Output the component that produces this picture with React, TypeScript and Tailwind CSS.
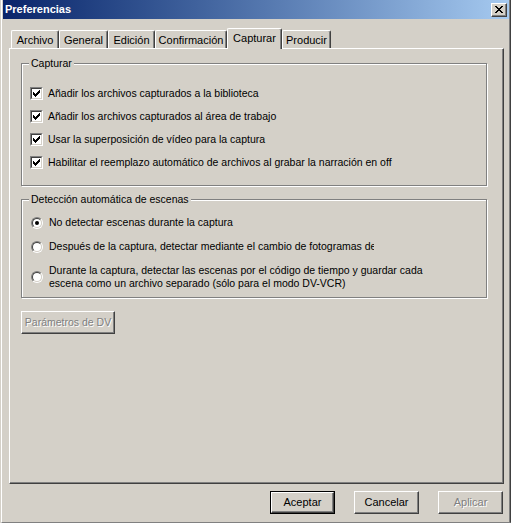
import React from 'react'

const CHECK = ['......X', '.....XX', 'X...XXX', 'XX.XXX.', 'XXXXX..', '.XXX...', '..X....']
const CLOSE_X = ['XX....XX', '.XX..XX.', '..XXXX..', '...XX...', '..XXXX..', '.XX..XX.', 'XX....XX']

function Pixels({ rows, color = '#000' }: { rows: string[]; color?: string }) {
  const w = rows[0].length
  const h = rows.length
  return (
    <svg width={w} height={h} viewBox={`0 0 ${w} ${h}`} shapeRendering="crispEdges" className="block">
      {rows.flatMap((row, y) =>
        row.split('').map((c, x) => (c === 'X' ? <rect key={`${x}-${y}`} x={x} y={y} width={1} height={1} fill={color} /> : null))
      )}
    </svg>
  )
}

const tabs = [
  { label: 'Archivo', w: 'w-[48px]' },
  { label: 'General', w: 'w-[49px]' },
  { label: 'Edición', w: 'w-[47px]' },
  { label: 'Confirmación', w: 'w-[72px]' },
  { label: 'Capturar', w: 'w-[55px]', active: true },
  { label: 'Producir', w: 'w-[49px]' },
]

const checks = [
  'Añadir los archivos capturados a la biblioteca',
  'Añadir los archivos capturados al área de trabajo',
  'Usar la superposición de vídeo para la captura',
  'Habilitar el reemplazo automático de archivos al grabar la narración en off',
]

function Checkbox() {
  return (
    <div className="w-[13px] h-[13px] shrink-0 border border-t-[#808080] border-l-[#808080] border-b-white border-r-white">
      <div className="w-full h-full bg-white border border-t-[#404040] border-l-[#404040] border-b-[#d4d0c8] border-r-[#d4d0c8] pl-px pt-px">
        <Pixels rows={CHECK} />
      </div>
    </div>
  )
}

function Radio({ checked }: { checked?: boolean }) {
  return (
    <div className="w-[12px] h-[12px] shrink-0 rounded-full border border-t-[#808080] border-l-[#808080] border-b-white border-r-white">
      <div className="w-full h-full rounded-full bg-white border border-t-[#404040] border-l-[#404040] border-b-[#d4d0c8] border-r-[#d4d0c8] flex items-center justify-center">
        {checked && <div className="w-[4px] h-[4px] rounded-full bg-black" />}
      </div>
    </div>
  )
}

function GroupBox({ title, className, children }: { title: string; className: string; children: React.ReactNode }) {
  return (
    <div className={`relative ml-[11px] w-[466px] border border-[#808080] shadow-[1px_1px_0_#fff,inset_1px_1px_0_#fff] ${className}`}>
      <span className="absolute left-[7px] -top-[7px] px-[2px] bg-[#d4d0c8] leading-[13px]">{title}</span>
      {children}
    </div>
  )
}

function Button({ children, isDefault, disabled, className = '' }: { children: React.ReactNode; isDefault?: boolean; disabled?: boolean; className?: string }) {
  const face = (
    <div className="w-full h-full border border-t-white border-l-white border-b-[#404040] border-r-[#404040] shadow-[inset_-1px_-1px_0_#808080] flex items-center justify-center">
      <span className={disabled ? 'text-[#808080] [text-shadow:1px_1px_0_#fff]' : ''}>{children}</span>
    </div>
  )
  return (
    <div className={`h-[23px] shrink-0 ${isDefault ? 'border border-black' : ''} ${className}`}>{face}</div>
  )
}

export default function App() {
  return (
    <div className="w-[511px] h-[523px] bg-[#d4d0c8] pl-px font-['Liberation_Sans',Arial,sans-serif] text-[10.5px] text-black overflow-hidden">
      <div className="h-full flex border-l border-white border-r border-r-[#404040] border-b border-b-[#808080]">
        <div className="flex-1 flex flex-col border-r border-r-[#808080] pl-px">
          {/* title bar */}
          <div className="h-[19px] flex items-center bg-linear-to-r from-[#0a246a] to-[#a6caf0] pl-[2px] pr-[2px]">
            <span className="font-bold text-white text-[11px] leading-none">Preferencias</span>
            <div className="ml-auto w-[16px] h-[14px] bg-[#d4d0c8] border border-t-white border-l-white border-b-[#404040] border-r-[#404040] shadow-[inset_-1px_-1px_0_#808080] flex items-center justify-center pb-px">
              <Pixels rows={CLOSE_X} />
            </div>
          </div>

          {/* tabs */}
          <div className="mt-[9px] ml-[8px] h-[20px] flex items-end relative z-10 text-[11px]">
            {tabs.map((t) =>
              t.active ? (
                <div
                  key={t.label}
                  className={`${t.w} h-[21px] -mb-px bg-[#d4d0c8] border-t border-l border-white border-r border-r-[#404040] shadow-[inset_-1px_0_0_#808080] rounded-t-[2px] flex items-center justify-center pb-[2px]`}
                >
                  {t.label}
                </div>
              ) : (
                <div
                  key={t.label}
                  className={`${t.w} h-[18px] border-t border-l border-white border-r border-r-[#404040] shadow-[inset_-1px_0_0_#808080] rounded-t-[2px] flex items-center justify-center pt-[1px]`}
                >
                  {t.label}
                </div>
              )
            )}
          </div>

          {/* tab panel */}
          <div className="ml-[6px] w-[495px] h-[436px] border-t border-l border-white border-r border-b border-r-[#404040] border-b-[#404040] shadow-[inset_-1px_-1px_0_#808080] flex flex-col">
            <GroupBox title="Capturar" className="mt-[14px] h-[123px]">
              <div className="pt-[23px] pl-[8px] flex flex-col gap-[10px]">
                {checks.map((c) => (
                  <div key={c} className="flex items-center gap-[5px] leading-[13px] whitespace-nowrap">
                    <Checkbox />
                    <span>{c}</span>
                  </div>
                ))}
              </div>
            </GroupBox>

            <GroupBox title="Detección automática de escenas" className="mt-[13px] h-[99px]">
              <div className="pt-[16px] pl-[9px] flex flex-col gap-[11px] leading-[13px]">
                <div className="flex items-center gap-[6px]">
                  <Radio checked />
                  <span>No detectar escenas durante la captura</span>
                </div>
                <div className="flex items-center gap-[6px]">
                  <Radio />
                  <span className="w-[325px] overflow-hidden whitespace-nowrap">
                    Después de la captura, detectar mediante el cambio de fotogramas de
                  </span>
                </div>
                <div className="flex items-center gap-[6px]">
                  <Radio />
                  <span className="whitespace-nowrap">
                    Durante la captura, detectar las escenas por el código de tiempo y guardar cada
                    <br />
                    escena como un archivo separado (sólo para el modo DV-VCR)
                  </span>
                </div>
              </div>
            </GroupBox>

            <Button disabled className="ml-[11px] mt-[13px] w-[94px] h-[22px]">
              Parámetros de DV
            </Button>
          </div>

          {/* dialog buttons */}
          <div className="mt-[7px] flex justify-end gap-[19px] pr-[6px] text-[11px]">
            <Button isDefault className="w-[65px]">Aceptar</Button>
            <Button className="w-[65px]">Cancelar</Button>
            <Button disabled className="w-[65px]">Aplicar</Button>
          </div>
        </div>
      </div>
    </div>
  )
}
